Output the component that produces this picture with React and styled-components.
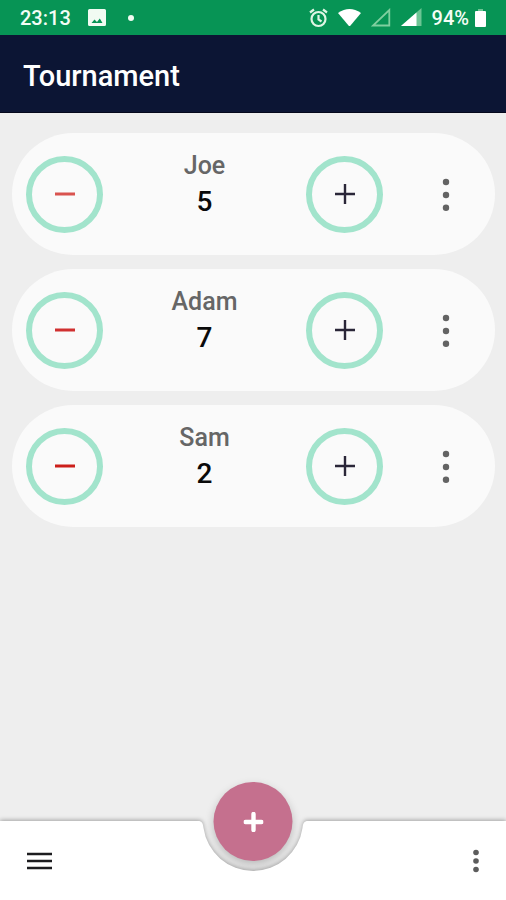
import { useState } from 'react';
import styled, { createGlobalStyle } from 'styled-components';

const PLAYERS = [
	{ id: 1, name: 'Joe', score: 5, minus: '#d9534f' },
	{ id: 2, name: 'Adam', score: 7, minus: '#d03030' },
	{ id: 3, name: 'Sam', score: 2, minus: '#cc1f1a' },
];

const App = () => {
	const [players, setPlayers] = useState(PLAYERS);

	const changeScore = (id, amount) => {
		setPlayers(players.map(el => (el.id === id ? { ...el, score: el.score + amount } : el)));
	};

	return (
		<>
			<GlobalStyle />
			<Page>
				<StatusBar>
					<Clock>23:13</Clock>
					<PictureIcon />
					<Dot />
					<StatusIcons>
						<AlarmIcon />
						<WifiIcon />
						<EmptySignalIcon />
						<SignalIcon />
						<Battery>
							94%
							<BatteryIcon />
						</Battery>
					</StatusIcons>
				</StatusBar>
				<Header>
					<Title>Tournament</Title>
				</Header>
				<PlayerList>
					{players.map(el => (
						<PlayerCard key={el.id}>
							<ScoreBtn
								color={el.minus}
								aria-label={`Remove a point from ${el.name}`}
								onClick={() => changeScore(el.id, -1)}
							>
								<svg width="20" height="20" viewBox="0 0 20 20">
									<path d="M0 10H20" stroke="currentColor" strokeWidth="3" />
								</svg>
							</ScoreBtn>
							<PlayerInfo>
								<Name>{el.name}</Name>
								<Score>{el.score}</Score>
							</PlayerInfo>
							<ScoreBtn
								color="#2a2638"
								aria-label={`Add a point to ${el.name}`}
								onClick={() => changeScore(el.id, 1)}
							>
								<svg width="20" height="20" viewBox="0 0 20 20">
									<path d="M0 10H20M10 0V20" stroke="currentColor" strokeWidth="2.4" />
								</svg>
							</ScoreBtn>
							<MoreArea>
								<IconBtn aria-label={`Options for ${el.name}`}>
									<svg width="10" height="34" viewBox="0 0 10 34">
										<g fill="#636363">
											<circle cx="5" cy="5" r="3.2" />
											<circle cx="5" cy="18" r="3.2" />
											<circle cx="5" cy="30.8" r="3.2" />
										</g>
									</svg>
								</IconBtn>
							</MoreArea>
						</PlayerCard>
					))}
				</PlayerList>
				<BottomBar>
					<AddBtn aria-label="Add player">
						<svg width="20" height="20" viewBox="0 0 20 20">
							<path d="M2 10H18M10 2V18" stroke="#fff" strokeWidth="4.4" strokeLinecap="round" />
						</svg>
					</AddBtn>
					<BarSurface>
						<BarSide>
							<IconBtn aria-label="Menu">
								<svg width="26" height="18" viewBox="0 0 26 18">
									<path d="M1 2H26M1 9H26M1 16H26" stroke="#1c1c1f" strokeWidth="2.4" />
								</svg>
							</IconBtn>
						</BarSide>
						<Notch viewBox="0 0 110 79">
							<path
								d="M0 0C4 0 5 2.5 5.5 7A50 50 0 0 0 104.5 7C105 2.5 106 0 110 0V79H0Z"
								fill="#fff"
							/>
						</Notch>
						<BarSide end>
							<IconBtn aria-label="More options">
								<svg width="8" height="24" viewBox="0 0 8 24">
									<g fill="#5c5c5c">
										<circle cx="4" cy="3.5" r="2.8" />
										<circle cx="4" cy="12" r="2.8" />
										<circle cx="4" cy="20.5" r="2.8" />
									</g>
								</svg>
							</IconBtn>
						</BarSide>
					</BarSurface>
				</BottomBar>
			</Page>
		</>
	);
};

export default App;

const PictureIcon = () => (
	<svg width="18" height="17" viewBox="0 0 18 17">
		<path
			fillRule="evenodd"
			fill="#f1fbf2"
			d="M1.5 0H16.5Q18 0 18 1.5V15.5Q18 17 16.5 17H1.5Q0 17 0 15.5V1.5Q0 0 1.5 0ZM3.5 14H14.5L11.8 9.5L9 13L6.5 10.5Z"
		/>
	</svg>
);

const AlarmIcon = () => (
	<svg width="20" height="20" viewBox="0 0 20 20" fill="none" stroke="#dff5e4" strokeWidth="2.2">
		<circle cx="10.5" cy="11" r="7" />
		<path d="M10.5 7V11.5L13.5 13.5M2 4.5L6 1.5M19 4.5L15 1.5" />
	</svg>
);

const WifiIcon = () => (
	<svg width="23" height="18" viewBox="0 0 23 18">
		<path d="M0 4Q11.5 -4 23 4L12.5 16.5Q11.5 17.5 10.5 16.5Z" fill="#fff" />
	</svg>
);

const EmptySignalIcon = () => (
	<svg width="20" height="19" viewBox="0 0 20 19">
		<path d="M2 17.5H18.3V2Z" fill="none" stroke="#7fcf9f" strokeWidth="1.8" />
	</svg>
);

const SignalIcon = () => (
	<svg width="21" height="19" viewBox="0 0 21 19">
		<path d="M0 18H20.5V0Z" fill="#6cc594" />
		<path d="M0 18H15.5V4.5Z" fill="#fff" />
	</svg>
);

const BatteryIcon = () => (
	<svg width="11" height="18" viewBox="0 0 11 18">
		<path d="M3 0H8V2H3Z" fill="#6cc594" />
		<path d="M1 2H10Q11 2 11 3V17Q11 18 10 18H1Q0 18 0 17V3Q0 2 1 2Z" fill="#fff" />
	</svg>
);

const GlobalStyle = createGlobalStyle`
	* {
		box-sizing: border-box;
	}

	body {
		margin: 0;
		background: #eeeeee;
		font-family: Roboto, "Liberation Sans", sans-serif;
	}

	button {
		padding: 0;
		border: none;
		background: none;
		cursor: pointer;
	}
`;

const Page = styled.div`
	display: flex;
	flex-direction: column;
	min-height: 100vh;
`;

const StatusBar = styled.div`
	display: flex;
	align-items: center;
	height: 35px;
	padding: 0 20px;
	background: #079455;
	color: #f4fdf5;
	font-size: 20px;
	font-weight: 500;
`;

const Clock = styled.span`
	margin-right: 17px;
`;

const Dot = styled.span`
	width: 6px;
	height: 6px;
	margin-left: 22px;
	border-radius: 50%;
	background: #f1fbf2;
`;

const StatusIcons = styled.div`
	display: flex;
	align-items: center;
	gap: 10px;
	margin-left: auto;
`;

const Battery = styled.span`
	display: flex;
	align-items: center;
	gap: 6px;
`;

const Header = styled.header`
	display: flex;
	align-items: center;
	height: 78px;
	padding: 4px 23px 0;
	border-bottom: 1px solid #05081c;
	background: #0c1534;
`;

const Title = styled.h1`
	margin: 0;
	color: #fff;
	font-size: 29px;
	font-weight: 500;
`;

const PlayerList = styled.ul`
	display: flex;
	flex-direction: column;
	flex: 1;
	gap: 14px;
	margin: 0;
	padding: 20px 11px 60px 12px;
	list-style: none;
`;

const PlayerCard = styled.li`
	display: flex;
	align-items: center;
	height: 122px;
	padding-left: 14px;
	border-radius: 61px;
	background: #fafafa;
`;

const ScoreBtn = styled.button`
	display: flex;
	flex-shrink: 0;
	justify-content: center;
	align-items: center;
	width: 77px;
	height: 77px;
	&& {
		border: 6px solid #a2e4cc;
	}
	border-radius: 50%;
	color: ${props => props.color};
`;

const PlayerInfo = styled.div`
	flex: 203;
	padding-bottom: 20px;
	text-align: center;
`;

const Name = styled.div`
	color: #666666;
	font-size: 25px;
	font-weight: 500;
	line-height: 36px;
`;

const Score = styled.div`
	color: #0a0a0a;
	font-size: 28px;
	font-weight: 500;
	line-height: 36px;
`;

const MoreArea = styled.div`
	display: flex;
	flex: 112;
	justify-content: center;

	button {
		margin-left: 14px;
	}
`;

const IconBtn = styled.button`
	display: flex;
`;

const BottomBar = styled.footer`
	position: relative;
	height: 79px;
`;

/* sits above the add button so its shadow stays inside the notch */
const BarSurface = styled.div`
	position: relative;
	display: flex;
	height: 100%;
	filter: drop-shadow(0 -1px 2px rgba(0, 0, 0, 0.32));
	pointer-events: none;

	button {
		pointer-events: auto;
	}
`;

const BarSide = styled.div`
	display: flex;
	flex: 1;
	justify-content: ${props => (props.end ? 'flex-end' : 'flex-start')};
	align-items: center;
	padding: 0 26px;
	background: #fff;
`;

const Notch = styled.svg`
	flex-shrink: 0;
	width: 110px;
	height: 79px;
`;

const AddBtn = styled.button`
	position: absolute;
	top: -39px;
	left: 50%;
	display: flex;
	justify-content: center;
	align-items: center;
	width: 79px;
	height: 79px;
	border-radius: 50%;
	background: #c5708e;
	box-shadow: 0 4px 10px rgba(0, 0, 0, 0.22);
	transform: translateX(-50%);
`;
